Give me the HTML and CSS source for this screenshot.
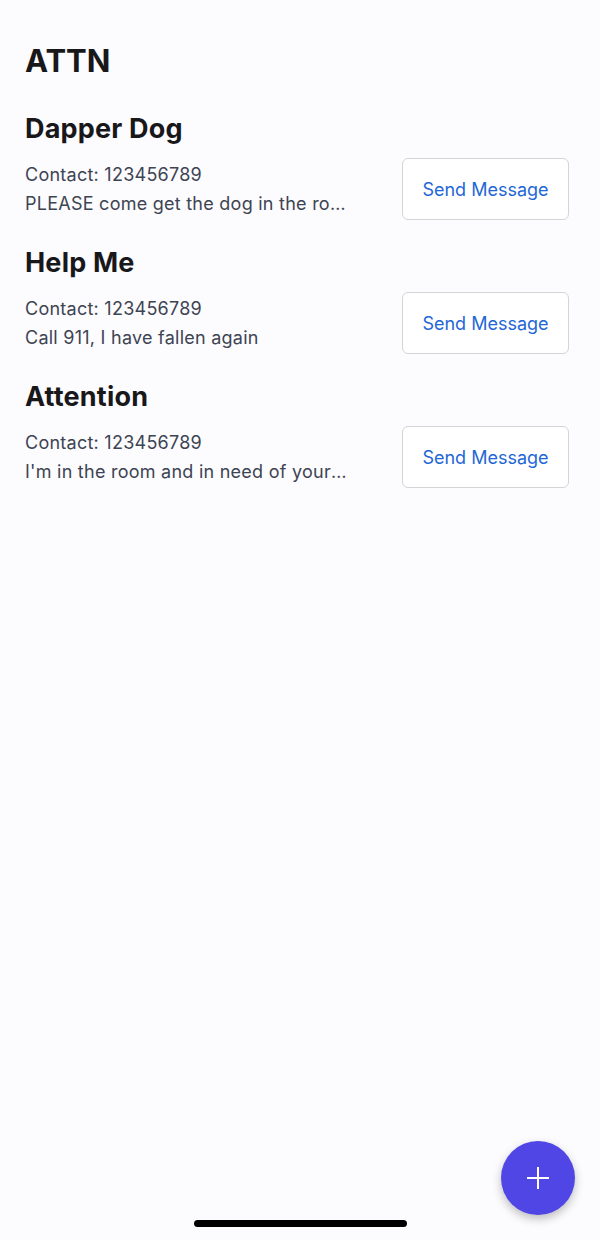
FILE: index.html
```html
<!DOCTYPE html>
<html lang="en">
<head>
<meta charset="utf-8">
<title>ATTN</title>
<link rel="stylesheet" href="styles.css">
</head>
<body>
<main class="screen">
  <h1 class="app-title">ATTN</h1>
  <section class="alert">
    <h2 class="alert-title">Dapper Dog</h2>
    <div class="alert-row">
      <div class="alert-text">
        <p class="line">Contact: 123456789</p>
        <p class="line">PLEASE come get the dog in the room, he is barking again</p>
      </div>
      <button class="send-btn" type="button">Send Message</button>
    </div>
  </section>
  <section class="alert">
    <h2 class="alert-title">Help Me</h2>
    <div class="alert-row">
      <div class="alert-text">
        <p class="line">Contact: 123456789</p>
        <p class="line">Call 911, I have fallen again</p>
      </div>
      <button class="send-btn" type="button">Send Message</button>
    </div>
  </section>
  <section class="alert">
    <h2 class="alert-title">Attention</h2>
    <div class="alert-row">
      <div class="alert-text">
        <p class="line">Contact: 123456789</p>
        <p class="line">I'm in the room and in need of your assistance</p>
      </div>
      <button class="send-btn" type="button">Send Message</button>
    </div>
  </section>
</main>
<button class="fab" type="button" aria-label="Add">
  <svg width="24" height="24" viewBox="0 0 24 24" fill="none" stroke="#ffffff" stroke-width="2" stroke-linecap="butt">
    <path d="M12 1v22M1 12h22"/>
  </svg>
</button>
<div class="home-indicator"></div>
</body>
</html>
```

FILE: styles.css
```css
html, body {
  margin: 0;
  padding: 0;
  background: #fcfbfe;
  height: 100%;
}
body {
  font-family: Inter, "Noto Sans", sans-serif;
  color: #18181b;
}
.screen {
  padding: 41px 31px 0 25px;
}
.app-title {
  margin: 0 0 32px;
  font-size: 31px;
  line-height: 40px;
  font-weight: 700;
  color: #18181b;
}
.alert {
  margin-bottom: 27px;
}
.alert-title {
  margin: 0 0 13px;
  font-size: 27px;
  letter-spacing: 0.2px;
  line-height: 32px;
  font-weight: 700;
  color: #18181b;
}
.alert-row {
  display: flex;
  align-items: center;
  justify-content: space-between;
}
.alert-text {
  width: 326px;
  min-width: 0;
}
.line {
  margin: 0;
  font-size: 18px;
  letter-spacing: 0.25px;
  line-height: 29px;
  color: #3d4452;
  white-space: nowrap;
  overflow: hidden;
  text-overflow: ellipsis;
}
.send-btn {
  width: 167px;
  height: 62px;
  background: #ffffff;
  border: 1.5px solid #d4d4d8;
  border-radius: 6px;
  font-family: Inter, "Noto Sans", sans-serif;
  font-size: 18px;
  color: #1f67d6;
  padding: 0;
}
.fab {
  position: fixed;
  right: 25px;
  bottom: 25px;
  width: 74px;
  height: 74px;
  border-radius: 50%;
  border: none;
  background: #4f46e5;
  display: flex;
  align-items: center;
  justify-content: center;
  box-shadow: 0 4px 10px rgba(0, 0, 0, 0.25);
  padding: 0;
}
.home-indicator {
  position: fixed;
  left: 194px;
  bottom: 13px;
  width: 213px;
  height: 7px;
  border-radius: 4px;
  background: #000000;
}
```
